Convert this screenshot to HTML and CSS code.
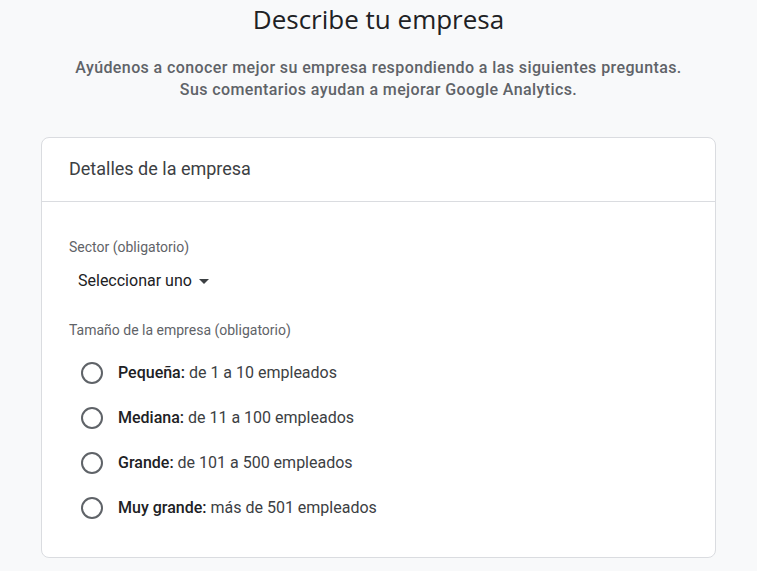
FILE: index.html
```html
<!DOCTYPE html>
<html lang="es">

<head>
    <meta charset="UTF-8">
    <meta name="viewport" content="width=device-width, initial-scale=1.0">
    <title>Describe tu empresa</title>
    <link rel="stylesheet" href="styles.css">
</head>

<body>
    <h1 class="page-title">Describe tu empresa</h1>
    <p class="page-intro">
        Ayúdenos a conocer mejor su empresa respondiendo a las siguientes preguntas.<br>
        Sus comentarios ayudan a mejorar Google Analytics.
    </p>

    <div class="card">
        <div class="card-header">Detalles de la empresa</div>
        <div class="card-body">
            <div class="field-label">Sector (obligatorio)</div>
            <div class="select">
                <span>Seleccionar uno</span>
                <span class="caret"></span>
            </div>

            <div class="field-label size-label">Tamaño de la empresa (obligatorio)</div>
            <!-- company size options -->
            <div class="radio-list">
                <label class="radio-row">
                    <span class="radio"></span>
                    <span><b>Pequeña:</b> de 1 a 10 empleados</span>
                </label>
                <label class="radio-row">
                    <span class="radio"></span>
                    <span><b>Mediana:</b> de 11 a 100 empleados</span>
                </label>
                <label class="radio-row">
                    <span class="radio"></span>
                    <span><b>Grande:</b> de 101 a 500 empleados</span>
                </label>
                <label class="radio-row">
                    <span class="radio"></span>
                    <span><b>Muy grande:</b> más de 501 empleados</span>
                </label>
            </div>
        </div>
    </div>
</body>

</html>
```

FILE: styles.css
```css
body {
    font-family: Roboto, "Liberation Sans", sans-serif;
    background-color: #f8f9fa;
    margin: 0;
    padding: 0;
    color: #202124;
}

.page-title {
    font-family: "Open Sans", Roboto, sans-serif;
    font-weight: 400;
    font-size: 26px;
    line-height: 36px;
    text-align: center;
    margin: 1px 0 0;
    color: #202124;
}

.page-intro {
    font-size: 16px;
    font-weight: 500;
    letter-spacing: 0.4px;
    line-height: 22px;
    color: #5f6368;
    text-align: center;
    margin: 20px 0 0;
}

.card {
    margin: 36px 41px 0;
    background-color: #fff;
    border: 1px solid #dadce0;
    border-radius: 8px;
}

.card-header {
    font-size: 18px;
    line-height: 24px;
    color: #3c4043;
    padding: 19px 27px 20px;
    border-bottom: 1px solid #dadce0;
}

.card-body {
    padding: 36px 27px 38px;
}

.field-label {
    font-size: 14px;
    line-height: 18px;
    color: #5f6368;
}

.select {
    display: inline-flex;
    align-items: center;
    gap: 7px;
    font-size: 16px;
    line-height: 20px;
    color: #202124;
    padding: 15px 9px 0;
}

.caret {
    width: 0;
    height: 0;
    border-left: 5px solid transparent;
    border-right: 5px solid transparent;
    border-top: 5px solid #3c4043;
}

.size-label {
    margin-top: 30px;
}

.radio-list {
    display: flex;
    flex-direction: column;
    gap: 23px;
    padding: 23px 0 0 12px;
}

.radio-row {
    display: flex;
    align-items: center;
    gap: 15px;
    font-size: 16px;
    line-height: 22px;
    color: #3c4043;
}

.radio-row b {
    font-weight: 500;
    color: #202124;
}

.radio {
    width: 18px;
    height: 18px;
    border: 2px solid #5f6368;
    border-radius: 50%;
}
```
